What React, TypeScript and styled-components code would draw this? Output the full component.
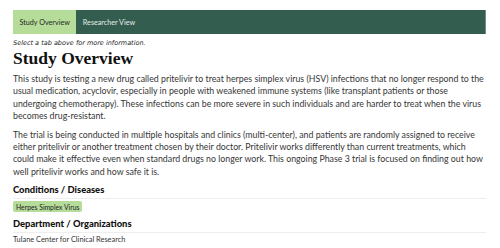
import React from "react";
import styled, { createGlobalStyle } from "styled-components";

const Global = createGlobalStyle`
  html, body { margin: 0; padding: 0; background: #ffffff; }
  body { font-family: "Lato", "Open Sans", sans-serif; color: #333333; font-size: 9px; }
`;

const Page = styled.div`
  padding: 10px 14px 0 13px;
  width: 500px;
  box-sizing: border-box;
`;

const TabBar = styled.nav`
  display: flex;
  height: 24px;
  background: #335d4e;
  border-right: 1px solid #6f8f84;
`;

const Tab = styled.button<{ $active?: boolean }>`
  display: flex;
  align-items: center;
  padding: 0 6.5px;
  border: none;
  margin: 0;
  font-family: "Lato", "Open Sans", sans-serif;
  font-size: 7.2px;
  cursor: pointer;
  background: ${(p) => (p.$active ? "#b6dc9a" : "transparent")};
  color: ${(p) => (p.$active ? "#1e2a22" : "#e6efe9")};
`;

const Hint = styled.p`
  margin: 5px 0 0;
  font-family: "DejaVu Sans", sans-serif;
  font-size: 6.5px;
  line-height: 8px;
  font-style: italic;
  color: #222;
`;

const Title = styled.h1`
  margin: 1px 0 4px;
  font-family: "Liberation Serif", "DejaVu Serif", serif;
  font-weight: 700;
  font-size: 17.5px;
  line-height: 21px;
  color: #111;
`;

const Para = styled.p`
  margin: 0 0 6px;
  font-size: 8.8px;
  line-height: 12.4px;
  color: #363636;
`;

const SectionHeading = styled.h2`
  margin: 6px 0 0;
  padding-bottom: 2px;
  border-bottom: 1px solid #eeeeee;
  font-family: "Lato", sans-serif;
  font-weight: 900;
  font-size: 9.4px;
  line-height: 12px;
  color: #111;
`;

const TagRow = styled.div`
  display: flex;
  gap: 4px;
  margin-top: 2px;
`;

const Tag = styled.span`
  padding: 1.5px 3px;
  border-radius: 2px;
  background: #b6dc9a;
  font-size: 6.8px;
  line-height: 8px;
  color: #222;
`;

const Small = styled.p`
  margin: 2px 0 0;
  font-size: 7.4px;
  line-height: 9px;
  color: #333;
`;

export default function App() {
  return (
    <>
      <Global />
      <Page>
        <TabBar>
          <Tab $active>Study Overview</Tab>
          <Tab>Researcher View</Tab>
        </TabBar>
        <Hint>Select a tab above for more information.</Hint>
        <Title>Study Overview</Title>
        <Para>
          This study is testing a new drug called pritelivir to treat herpes simplex virus (HSV)
          infections that no longer respond to the usual medication, acyclovir, especially in people
          with weakened immune systems (like transplant patients or those undergoing chemotherapy).
          These infections can be more severe in such individuals and are harder to treat when the
          virus becomes drug-resistant.
        </Para>
        <Para>
          The trial is being conducted in multiple hospitals and clinics (multi-center), and patients
          are randomly assigned to receive either pritelivir or another treatment chosen by their
          doctor. Pritelivir works differently than current treatments, which could make it effective
          even when standard drugs no longer work. This ongoing Phase 3 trial is focused on finding
          out how well pritelivir works and how safe it is.
        </Para>
        <SectionHeading>Conditions / Diseases</SectionHeading>
        <TagRow>
          <Tag>Herpes Simplex Virus</Tag>
        </TagRow>
        <SectionHeading>Department / Organizations</SectionHeading>
        <Small>Tulane Center for Clinical Research</Small>
      </Page>
    </>
  );
}
